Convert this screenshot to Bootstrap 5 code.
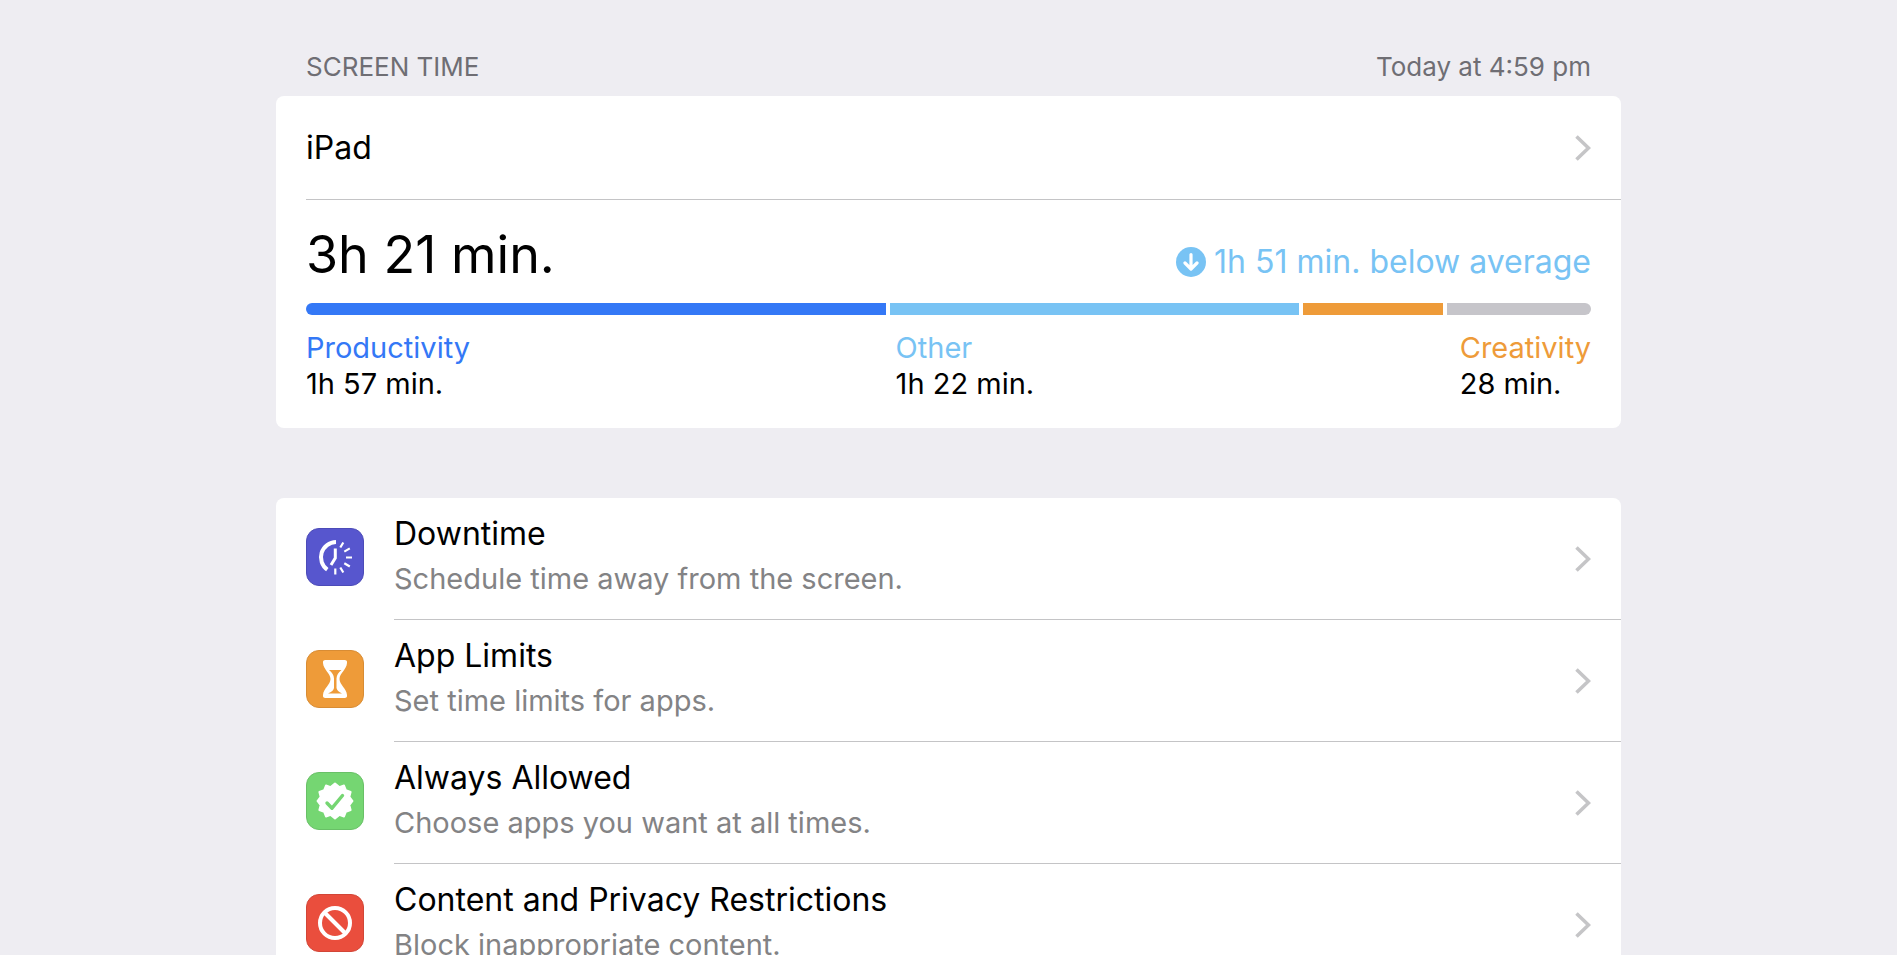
<!DOCTYPE html>
<html lang="en">
<head>
<meta charset="utf-8">
<meta name="viewport" content="width=device-width, initial-scale=1">
<title>Screen Time</title>
<link href="https://cdn.jsdelivr.net/npm/bootstrap@5.3.0/dist/css/bootstrap.min.css" rel="stylesheet">
<style>
  body { background: #eeedf2; color: #000; font-family: "Inter", "Liberation Sans", sans-serif; }
  a { color: inherit; text-decoration: none; }
  .settings { max-width: 1345px; padding-top: 49px; }
  .section-head { padding: 0 30px; font-size: 26px; line-height: 36px; margin-bottom: 11px; color: #6f6e74; }
  .panel { background: #fff; border-radius: 8px; }
  .panel + .panel { margin-top: 70px; }
  .inset { padding: 0 30px; }
  .line { border-bottom: 1px solid #c4c4c6; }
  .device { margin-left: 30px; padding-right: 30px; height: 104px; }
  .title { font-size: 32px; line-height: 40px; }
  .total { font-size: 52px; line-height: 68px; }
  .summary { padding-top: 21px; padding-bottom: 26px; }
  .trend-icon { vertical-align: -4px; margin-right: 8px; }
  .usage { height: 12px; gap: 4px; margin: 14px 0 15px; border-radius: 6px; }
  .caption { font-size: 29px; line-height: 36px; }
  .muted { color: #838385; }
  .blue { color: #3478f6; } .sky { color: #78c3f4; } .orange { color: #ee9b39; }
  .seg-blue { background: #3478f6; } .seg-sky { background: #78c3f4; }
  .seg-orange { background: #ee9b39; } .seg-gray { background: #c6c5ca; }
  .option { padding-left: 30px; gap: 30px; }
  .option-body { height: 122px; padding-right: 30px; }
  .option-icon { width: 58px; height: 58px; margin-bottom: 5px; }
  .stack { gap: 7px; padding-bottom: 6px; }
</style>
</head>
<body class="vh-100 overflow-hidden">
<svg class="d-none" aria-hidden="true">
  <symbol id="chevron" viewBox="0 0 16 26"><path d="M1.5 1.5 13.5 13 1.5 24.5" fill="none" stroke="#c5c5c7" stroke-width="3.6" stroke-linejoin="miter"/></symbol>
</svg>
<main class="settings mx-auto">
  <header class="section-head d-flex justify-content-between">
    <span>SCREEN TIME</span><span>Today at 4:59 pm</span>
  </header>

  <section class="panel">
    <a href="#" class="device line d-flex align-items-center justify-content-between">
      <span class="title">iPad</span>
      <svg width="16" height="26" aria-hidden="true"><use href="#chevron"/></svg>
    </a>
    <div class="summary inset">
      <div class="d-flex align-items-baseline justify-content-between">
        <div class="total">3h 21 min.</div>
        <div class="title sky"><svg class="trend-icon" width="30" height="30" viewBox="0 0 30 30" aria-hidden="true"><circle cx="15" cy="15" r="15" fill="#78c3f4"/><path d="M15 7.5V21.5M9 16l6 6 6-6" fill="none" stroke="#fff" stroke-width="3.2" stroke-linecap="round" stroke-linejoin="round"/></svg><span>1h 51 min. below average</span></div>
      </div>
      <div class="usage d-flex overflow-hidden">
        <div class="seg-blue" style="flex:580 1 0"></div>
        <div class="seg-sky" style="flex:409 1 0"></div>
        <div class="seg-orange" style="flex:140 1 0"></div>
        <div class="seg-gray" style="flex:144 1 0"></div>
      </div>
      <div class="caption d-flex justify-content-between">
        <div><div class="blue">Productivity</div><div>1h 57 min.</div></div>
        <div><div class="sky">Other</div><div>1h 22 min.</div></div>
        <div><div class="orange">Creativity</div><div>28 min.</div></div>
      </div>
    </div>
  </section>

  <nav class="panel">
    <a href="#" class="option d-flex align-items-center">
      <svg class="option-icon flex-shrink-0" viewBox="0 0 58 58" aria-hidden="true">
        <rect x=".5" y=".5" width="57" height="57" rx="12.5" fill="#5756ce" stroke="#4c4bb8"/>
        <path d="M30 14A15.3 15.3 0 0 0 21.3 41.7" fill="none" stroke="#fff" stroke-width="4"/>
        <path d="M29.3 20.500V30L25 37" fill="none" stroke="#fff" stroke-width="3"/>
        <path d="M34.300 19.500l3-5M38.300 23.600l5.500-3.200M40 29.500h6M38.300 35.300l5.500 3.200M34.300 39.500l3 5M29.300 40.500v6" stroke="#fff" stroke-width="2.200"/>
      </svg>
      <div class="option-body line flex-grow-1 d-flex align-items-center justify-content-between">
        <div class="stack d-flex flex-column"><div class="title">Downtime</div><div class="caption muted">Schedule time away from the screen.</div></div>
        <svg width="16" height="26" aria-hidden="true"><use href="#chevron"/></svg>
      </div>
    </a>
    <a href="#" class="option d-flex align-items-center">
      <svg class="option-icon flex-shrink-0" viewBox="0 0 58 58" aria-hidden="true">
        <rect x=".5" y=".5" width="57" height="57" rx="12.5" fill="#ee9b39" stroke="#d88c34"/>
        <path d="M19.500 10H38.500Q41.500 10 41 13C40.500 20 33.500 23 33.500 29S40.500 38 41 45Q41.500 48 38.500 48H19.500Q16.500 48 17 45C17.500 38 24.500 35 24.500 29S17.500 20 17 13Q16.500 10 19.500 10Z" fill="#fff"/>
        <path d="M23 20H35.500Q30.500 24 30.500 28.500V38Q31 41 36 43.500H22Q27.500 41 28 38V28.500Q28 24 23 20Z" fill="#ee9b39"/>
      </svg>
      <div class="option-body line flex-grow-1 d-flex align-items-center justify-content-between">
        <div class="stack d-flex flex-column"><div class="title">App Limits</div><div class="caption muted">Set time limits for apps.</div></div>
        <svg width="16" height="26" aria-hidden="true"><use href="#chevron"/></svg>
      </div>
    </a>
    <a href="#" class="option d-flex align-items-center">
      <svg class="option-icon flex-shrink-0" viewBox="0 0 58 58" aria-hidden="true">
        <rect x=".5" y=".5" width="57" height="57" rx="12.5" fill="#75d672" stroke="#69c067"/>
        <path d="M29 11.500L33.300 15.100 38 13.500 39.800 18.200 44.600 20 43.300 24.900 46.500 29 43.300 33.100 44.600 38 39.800 39.800 38 44.500 33.300 42.900 29 46.500 24.700 42.900 20 44.500 18.200 39.800 13.400 38 14.700 33.100 11.500 29 14.700 24.900 13.400 20 18.200 18.200 20 13.500 24.700 15.100Z" fill="#fff" stroke="#fff" stroke-width="2" stroke-linejoin="round"/>
        <path d="M21 31l5 5.200L36.500 23.500" fill="none" stroke="#75d672" stroke-width="3.400" stroke-linecap="round" stroke-linejoin="round"/>
      </svg>
      <div class="option-body line flex-grow-1 d-flex align-items-center justify-content-between">
        <div class="stack d-flex flex-column"><div class="title">Always Allowed</div><div class="caption muted">Choose apps you want at all times.</div></div>
        <svg width="16" height="26" aria-hidden="true"><use href="#chevron"/></svg>
      </div>
    </a>
    <a href="#" class="option d-flex align-items-center">
      <svg class="option-icon flex-shrink-0" viewBox="0 0 58 58" aria-hidden="true">
        <rect x=".5" y=".5" width="57" height="57" rx="12.5" fill="#ea4e3d" stroke="#d24637"/>
        <circle cx="29" cy="29" r="15" fill="none" stroke="#fff" stroke-width="4"/>
        <path d="M18.500 18.500l21 21" stroke="#fff" stroke-width="4"/>
      </svg>
      <div class="option-body line flex-grow-1 d-flex align-items-center justify-content-between">
        <div class="stack d-flex flex-column"><div class="title">Content and Privacy Restrictions</div><div class="caption muted">Block inappropriate content.</div></div>
        <svg width="16" height="26" aria-hidden="true"><use href="#chevron"/></svg>
      </div>
    </a>
  </nav>
</main>
<script src="https://cdn.jsdelivr.net/npm/bootstrap@5.3.0/dist/js/bootstrap.bundle.min.js"></script>
</body>
</html>
